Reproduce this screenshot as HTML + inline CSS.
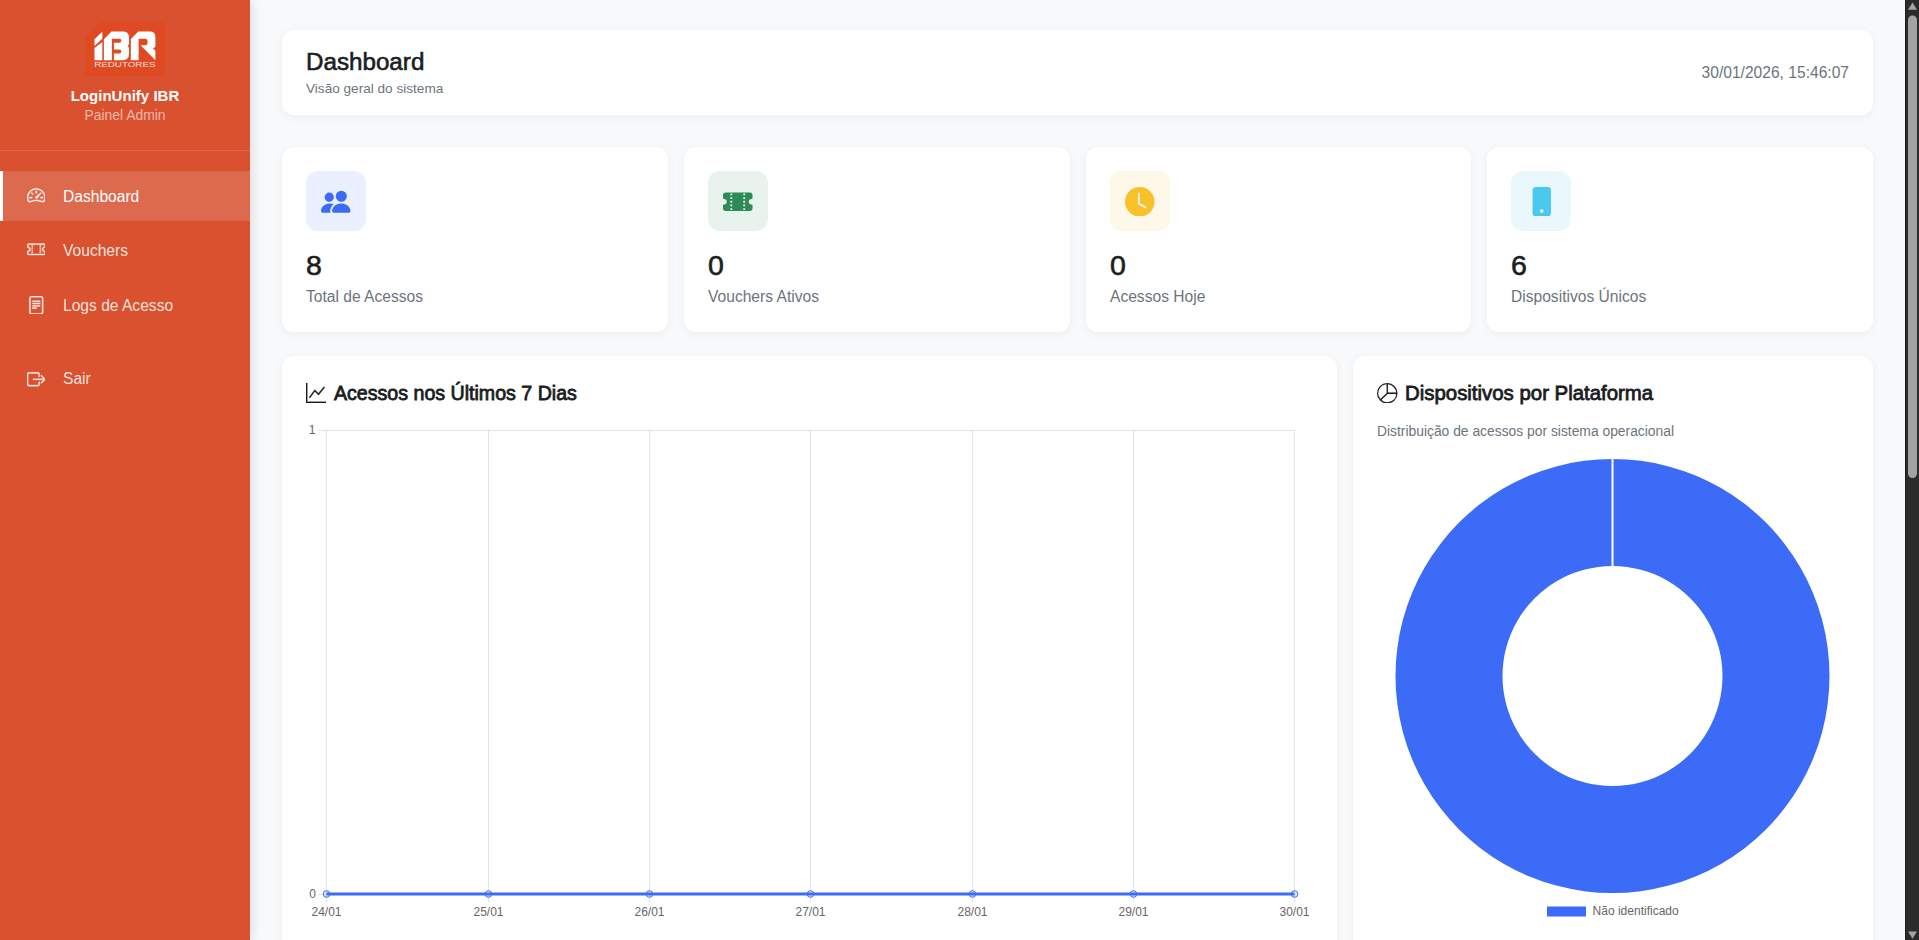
<!DOCTYPE html>
<html lang="pt-BR">
<head>
<meta charset="utf-8">
<title>Dashboard - LoginUnify IBR</title>
<style>
*{box-sizing:border-box;margin:0;padding:0}
html,body{width:1919px;height:940px;overflow:hidden}
body{font-family:"Liberation Sans",sans-serif;background:#f8f9fa;position:relative;color:#212529}
.abs{position:absolute;white-space:nowrap;line-height:1}
.sidebar{position:absolute;left:0;top:0;width:250px;height:940px;background:#d9512e;box-shadow:2px 0 10px rgba(0,0,0,.12);z-index:2}
.sep{position:absolute;left:0;top:150px;width:250px;height:1px;background:rgba(255,255,255,.12)}
.nav-active{position:absolute;left:0;top:171px;width:250px;height:49.5px;background:rgba(255,255,255,.15);border-left:3px solid #fff}
.navt{color:rgba(255,255,255,.85);font-size:15.6px}
.navt.on{color:#fff}
.nicon{position:absolute;fill:rgba(255,255,255,.85);stroke:rgba(255,255,255,.85);stroke-width:.32}
.card{position:absolute;background:#fff;border-radius:12px;box-shadow:0 2px 10px rgba(0,0,0,.05)}
.ibox{position:absolute;width:60px;height:60px;border-radius:12px;top:171px}
.num{font-size:28.5px;font-weight:400;-webkit-text-stroke:.6px #1a1d21;color:#1a1d21}
.lbl{font-size:15.6px;color:#6c757d}
.sb{position:absolute;left:1905px;top:0;width:14px;height:940px;background:#2b2b2b;border-left:1px solid #1e1e1e;z-index:5}
</style>
</head>
<body>
<!-- Sidebar -->
<div class="sidebar">
  <svg class="abs" style="left:85px;top:22px" width="80" height="54" viewBox="0 0 80 54">
    <polygon points="15,0 80,0 80,54 0,54 0,15" fill="#e04a22"/>
    <g fill="#fff">
      <polygon points="9.5,17.2 17.3,9.8 17.3,16.7 9.5,23.9"/>
      <polygon points="9.5,26.1 17.3,19.9 17.3,38.2 9.5,38.2"/>
      <path d="M18.9,38.2 V17.2 L26.5,9.6 H38.5 Q44,9.6 44,16 V21.5 Q44,23 42.7,23.9 Q44,25 44,26.5 V32 Q44,38.2 37.5,38.2 H28.9 V31.5 H34.3 Q36.3,31.5 36.3,29.5 Q36.3,27.5 34.3,27.5 H28.9 V20.7 H34.3 Q36.3,20.7 36.3,18.7 Q36.3,16.7 34.3,16.7 H26.9 V38.2 Z"/>
      <path d="M45.8,17 L53.4,9.6 H65 Q70.4,9.6 70.4,15.5 V24.8 Q69.5,25.6 67.8,26.2 Q69.6,27.4 70.4,29 V38.2 L55.6,23.2 H60.6 Q62.6,23.2 62.6,19.95 Q62.6,16.7 60.6,16.7 H53.6 V38.2 H45.8 Z"/>
      <text x="9.2" y="45.1" font-family="Liberation Sans" font-size="7.4" textLength="61.3" lengthAdjust="spacingAndGlyphs" fill-opacity=".85">REDUTORES</text>
    </g>
  </svg>
  <div class="abs" style="left:0;width:250px;text-align:center;top:88px;font-size:15.05px;font-weight:700;color:#fff">LoginUnify IBR</div>
  <div class="abs" style="left:0;width:250px;text-align:center;top:108.85px;font-size:13.9px;color:rgba(255,255,255,.6)">Painel Admin</div>
  <div class="sep"></div>
  <div class="nav-active"></div>
  <div class="abs navt on" style="left:63px;top:188.79px">Dashboard</div>
  <div class="abs navt" style="left:63px;top:242.79px">Vouchers</div>
  <div class="abs navt" style="left:63px;top:297.69px">Logs de Acesso</div>
  <div class="abs navt" style="left:63px;top:371.49px">Sair</div>
  <svg class="nicon" style="left:26.5px;top:186.05px" width="18.5" height="18.5" viewBox="0 0 16 16" fill="#fff"><path d="M8 4a.5.5 0 0 1 .5.5V6a.5.5 0 0 1-1 0V4.5A.5.5 0 0 1 8 4M3.732 5.732a.5.5 0 0 1 .707 0l.915.914a.5.5 0 1 1-.708.708l-.914-.915a.5.5 0 0 1 0-.707M2 10a.5.5 0 0 1 .5-.5h1.586a.5.5 0 0 1 0 1H2.5A.5.5 0 0 1 2 10m9.5 0a.5.5 0 0 1 .5-.5h1.5a.5.5 0 0 1 0 1H12a.5.5 0 0 1-.5-.5m.754-4.246a.39.39 0 0 0-.527-.02L7.547 9.31a.91.91 0 1 0 1.302 1.258l3.434-4.297a.39.39 0 0 0-.029-.518z"/><path fill-rule="evenodd" d="M0 10a8 8 0 1 1 15.547 2.661c-.442 1.253-1.845 1.602-2.932 1.25C11.309 13.488 9.475 13 8 13c-1.474 0-3.31.488-4.615.911-1.087.352-2.49.003-2.932-1.25A8 8 0 0 1 0 10m8-7a7 7 0 0 0-6.603 9.329c.203.575.923.876 1.68.63C4.397 12.533 6.358 12 8 12s3.604.532 4.923.96c.757.245 1.477-.056 1.68-.631A7 7 0 0 0 8 3"/></svg>
  <svg class="nicon" style="left:26.5px;top:240.05px" width="18.5" height="18.5" viewBox="0 0 16 16"><path d="M4 4.85v.9h1v-.9zm7 0v.9h1v-.9zm-7 1.8v.9h1v-.9zm7 0v.9h1v-.9zm-7 1.8v.9h1v-.9zm7 0v.9h1v-.9zm-7 1.8v.9h1v-.9zm7 0v.9h1v-.9z"/><path d="M1.5 3A1.5 1.5 0 0 0 0 4.5V6a.5.5 0 0 0 .5.5 1.5 1.5 0 1 1 0 3 .5.5 0 0 0-.5.5v1.5A1.5 1.5 0 0 0 1.5 13h13a1.5 1.5 0 0 0 1.5-1.5V10a.5.5 0 0 0-.5-.5 1.5 1.5 0 0 1 0-3A.5.5 0 0 0 16 6V4.5A1.5 1.5 0 0 0 14.5 3zM1 4.5a.5.5 0 0 1 .5-.5h13a.5.5 0 0 1 .5.5v1.05a2.5 2.5 0 0 0 0 4.9v1.05a.5.5 0 0 1-.5.5h-13a.5.5 0 0 1-.5-.5v-1.05a2.5 2.5 0 0 0 0-4.9z"/></svg>
  <svg class="nicon" style="left:26.5px;top:295.5px" width="18.5" height="18.5" viewBox="0 0 16 16"><path d="M5 4a.5.5 0 0 0 0 1h6a.5.5 0 0 0 0-1zm-.5 2.5A.5.5 0 0 1 5 6h6a.5.5 0 0 1 0 1H5a.5.5 0 0 1-.5-.5M5 8a.5.5 0 0 0 0 1h6a.5.5 0 0 0 0-1zm0 2a.5.5 0 0 0 0 1h3a.5.5 0 0 0 0-1z"/><path d="M2 2a2 2 0 0 1 2-2h8a2 2 0 0 1 2 2v12a2 2 0 0 1-2 2H4a2 2 0 0 1-2-2zm10-1H4a1 1 0 0 0-1 1v12a1 1 0 0 0 1 1h8a1 1 0 0 0 1-1V2a1 1 0 0 0-1-1"/></svg>
  <svg class="nicon" style="left:26.5px;top:369.6px" width="18.5" height="18.5" viewBox="0 0 16 16"><path fill-rule="evenodd" d="M10 12.5a.5.5 0 0 1-.5.5h-8a.5.5 0 0 1-.5-.5v-9a.5.5 0 0 1 .5-.5h8a.5.5 0 0 1 .5.5v2a.5.5 0 0 0 1 0v-2A1.5 1.5 0 0 0 9.5 2h-8A1.5 1.5 0 0 0 0 3.5v9A1.5 1.5 0 0 0 1.5 14h8a1.5 1.5 0 0 0 1.5-1.5v-2a.5.5 0 0 0-1 0z"/><path fill-rule="evenodd" d="M15.854 8.354a.5.5 0 0 0 0-.708l-3-3a.5.5 0 0 0-.708.708L14.293 7.5H5.5a.5.5 0 0 0 0 1h8.793l-2.147 2.146a.5.5 0 0 0 .708.708z"/></svg>
</div>

<!-- Header -->
<div class="card" style="left:282px;top:30px;width:1591px;height:85px"></div>
<div class="abs" style="left:306px;top:49.5px;font-size:24.2px;font-weight:400;-webkit-text-stroke:.6px #1a1d21;color:#1a1d21">Dashboard</div>
<div class="abs" style="left:306px;top:81.8px;font-size:13.6px;color:#6c757d">Visão geral do sistema</div>
<div class="abs" style="right:70px;top:64.7px;font-size:15.6px;color:#6c757d">30/01/2026, 15:46:07</div>

<!-- Stat cards -->
<div class="card" style="left:282px;top:147px;width:386px;height:185px"></div>
<div class="card" style="left:684px;top:147px;width:386px;height:185px"></div>
<div class="card" style="left:1086px;top:147px;width:385px;height:185px"></div>
<div class="card" style="left:1487px;top:147px;width:386px;height:185px"></div>

<div class="ibox" style="left:306px;background:#eaf0fe"></div>
<div class="ibox" style="left:708px;background:#e8f3ee"></div>
<div class="ibox" style="left:1110px;background:#fef8e9"></div>
<div class="ibox" style="left:1511px;background:#eaf8fd"></div>

<svg class="abs" style="left:321.25px;top:186.75px" width="29.5" height="29.5" viewBox="0 0 16 16" fill="#3c6bf8"><path d="M7 14s-1 0-1-1 1-4 5-4 5 3 5 4-1 1-1 1zm4-6a3 3 0 1 0 0-6 3 3 0 0 0 0 6m-5.784 6A2.24 2.24 0 0 1 5 13c0-1.355.68-2.75 1.936-3.72A6.3 6.3 0 0 0 5 9c-4 0-5 3-5 4s1 1 1 1zM4.5 8a2.5 2.5 0 1 0 0-5 2.5 2.5 0 0 0 0 5"/></svg>
<svg class="abs" style="left:723.25px;top:186.75px" width="29.5" height="29.5" viewBox="0 0 16 16" fill="#2e8b57"><path fill-rule="evenodd" d="M0 4.5A1.5 1.5 0 0 1 1.5 3h13A1.5 1.5 0 0 1 16 4.5V6a.5.5 0 0 1-.5.5 1.5 1.5 0 0 0 0 3 .5.5 0 0 1 .5.5v1.5a1.5 1.5 0 0 1-1.5 1.5h-13A1.5 1.5 0 0 1 0 11.5V10a.5.5 0 0 1 .5-.5 1.5 1.5 0 1 0 0-3A.5.5 0 0 1 0 6zM4 3.5v1h1v-1zM4 5.5v1h1v-1zM4 7.5v1h1v-1zM4 9.5v1h1v-1zM4 11.5v1h1v-1zM11 3.5v1h1v-1zM11 5.5v1h1v-1zM11 7.5v1h1v-1zM11 9.5v1h1v-1zM11 11.5v1h1v-1z"/></svg>
<svg class="abs" style="left:1125px;top:186.75px" width="29.5" height="29.5" viewBox="0 0 16 16" fill="#f6c12b"><path d="M16 8A8 8 0 1 1 0 8a8 8 0 0 1 16 0M8 3.5a.5.5 0 0 0-1 0V9a.5.5 0 0 0 .252.434l3.5 2a.5.5 0 0 0 .496-.868L8 8.71z"/></svg>
<svg class="abs" style="left:1526.5px;top:186.75px" width="29.5" height="29.5" viewBox="0 0 16 16" fill="#4bc8ee"><path d="M3 2a2 2 0 0 1 2-2h6a2 2 0 0 1 2 2v12a2 2 0 0 1-2 2H5a2 2 0 0 1-2-2zm6 11a1 1 0 1 0-2 0 1 1 0 0 0 2 0"/></svg>
<div class="abs num" style="left:306px;top:250.5px">8</div>
<div class="abs num" style="left:708px;top:250.5px">0</div>
<div class="abs num" style="left:1110px;top:250.5px">0</div>
<div class="abs num" style="left:1511px;top:250.5px">6</div>
<div class="abs lbl" style="left:306px;top:288.59px">Total de Acessos</div>
<div class="abs lbl" style="left:708px;top:288.59px">Vouchers Ativos</div>
<div class="abs lbl" style="left:1110px;top:288.59px">Acessos Hoje</div>
<div class="abs lbl" style="left:1511px;top:288.59px">Dispositivos Únicos</div>

<!-- Chart cards -->
<div class="card" style="left:282px;top:356px;width:1055px;height:620px"></div>
<div class="card" style="left:1353px;top:356px;width:520px;height:620px"></div>
<div class="abs" style="left:334px;top:384.3px;font-size:19.6px;font-weight:400;-webkit-text-stroke:.8px #1a1d21;color:#1a1d21">Acessos nos Últimos 7 Dias</div>
<div class="abs" style="left:1405px;top:382.75px;font-size:20.4px;font-weight:400;-webkit-text-stroke:.8px #1a1d21;color:#1a1d21">Dispositivos por Plataforma</div>
<div class="abs" style="left:1377px;top:424.7px;font-size:13.85px;color:#6c757d">Distribuição de acessos por sistema operacional</div>

<svg class="abs" style="left:0;top:0" width="1919" height="940" viewBox="0 0 1919 940">
  <g stroke="rgba(0,0,0,0.1)" stroke-width="1">
    <line x1="318" y1="430.5" x2="1294.5" y2="430.5"/>
    <line x1="318" y1="894.5" x2="1294.5" y2="894.5"/>
    <line x1="326.5" y1="430" x2="326.5" y2="902.5" /><line x1="488.5" y1="430" x2="488.5" y2="902.5" /><line x1="649.5" y1="430" x2="649.5" y2="902.5" /><line x1="810.5" y1="430" x2="810.5" y2="902.5" /><line x1="972.5" y1="430" x2="972.5" y2="902.5" /><line x1="1133.5" y1="430" x2="1133.5" y2="902.5" /><line x1="1294.5" y1="430" x2="1294.5" y2="902.5" />
  </g>
  <g font-family="Liberation Sans" font-size="12" fill="#666" text-anchor="end">
    <text x="315.5" y="434">1</text>
    <text x="316" y="897.5">0</text>
  </g>
  <g font-family="Liberation Sans" font-size="12" fill="#666" text-anchor="middle"><text x="326.5" y="916">24/01</text><text x="488.5" y="916">25/01</text><text x="649.5" y="916">26/01</text><text x="810.5" y="916">27/01</text><text x="972.5" y="916">28/01</text><text x="1133.5" y="916">29/01</text><text x="1294.5" y="916">30/01</text></g>
  <line x1="326.5" y1="894" x2="1294.5" y2="894" stroke="#3c6bf8" stroke-width="3"/>
  <g fill="rgba(60,107,248,0.12)" stroke="#3c6bf8" stroke-width="1"><circle cx="326.5" cy="894" r="3.3" /><circle cx="488.5" cy="894" r="3.3" /><circle cx="649.5" cy="894" r="3.3" /><circle cx="810.5" cy="894" r="3.3" /><circle cx="972.5" cy="894" r="3.3" /><circle cx="1133.5" cy="894" r="3.3" /><circle cx="1294.5" cy="894" r="3.3" /></g>
  <!-- donut -->
  <path fill-rule="evenodd" fill="#3c6bf8" d="M1612.5,459 a217,217 0 1,0 0.001,0 Z M1612.5,566 a110,110 0 1,1 -0.001,0 Z"/>
  <line x1="1612.5" y1="456" x2="1612.5" y2="568" stroke="#fff" stroke-width="2"/>
  <rect x="1547" y="906.5" width="39" height="10" fill="#3c6bf8"/>
  <text x="1592.6" y="914.5" font-family="Liberation Sans" font-size="12" fill="#666">Não identificado</text>
</svg>
<svg class="abs" style="left:306px;top:383.3px" width="20" height="20" viewBox="0 0 16 16" fill="#1a1d21" stroke="#1a1d21" stroke-width=".25"><path fill-rule="evenodd" d="M0 0h1v15h15v1H0zm14.817 3.113a.5.5 0 0 1 .07.704l-4.5 5.5a.5.5 0 0 1-.74.037L7.06 6.767l-3.656 5.027a.5.5 0 0 1-.808-.588l4-5.5a.5.5 0 0 1 .758-.06l2.609 2.61 4.15-5.073a.5.5 0 0 1 .704-.07"/></svg>
<svg class="abs" style="left:1377px;top:382.5px" width="20.5" height="20.5" viewBox="0 0 16 16" fill="#1a1d21" stroke="#1a1d21" stroke-width=".08"><path d="M7.5 1.018a7 7 0 0 0-4.79 11.566L7.5 7.793zm1 0V7.5h6.482A7 7 0 0 0 8.5 1.018M14.982 8.5H8.207l-4.79 4.79A7 7 0 0 0 14.982 8.5M0 8a8 8 0 1 1 16 0A8 8 0 0 1 0 8"/></svg>

<!-- Scrollbar -->
<div class="sb">
  <svg class="abs" style="left:0;top:0" width="14" height="940" viewBox="0 0 14 940">
    <polygon points="2,9.8 6.5,2.5 11,9.8" fill="#a3a3a3"/>
    <rect x="2" y="15.5" width="9" height="462.5" rx="4.5" fill="#a3a3a3"/>
    <polygon points="2,931.5 11,931.5 6.5,938.7" fill="#a3a3a3"/>
  </svg>
</div>
</body>
</html>
